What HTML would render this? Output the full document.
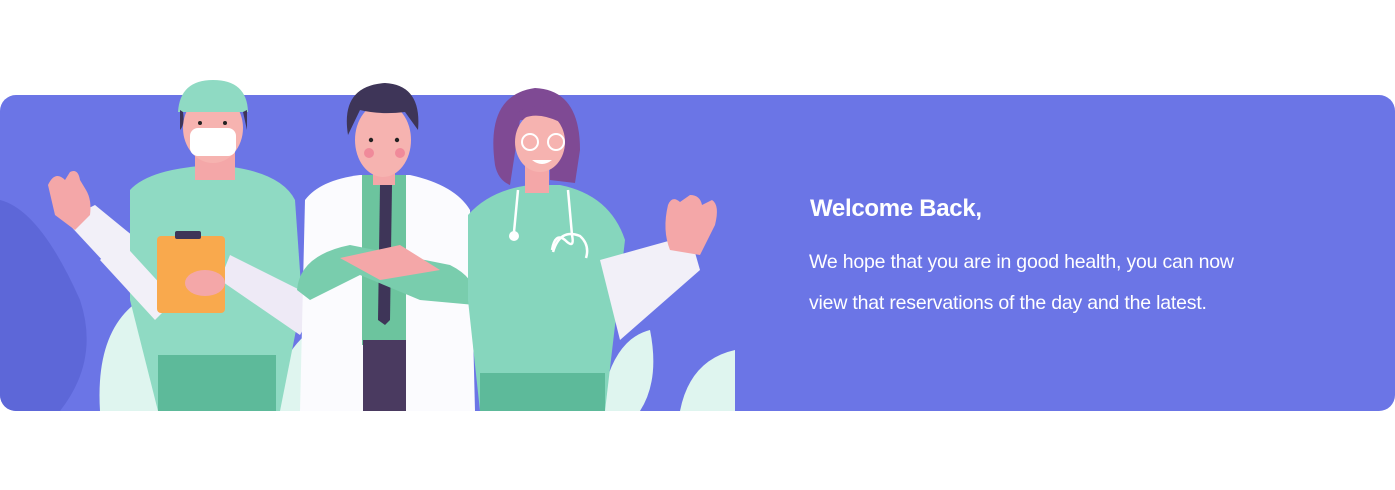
<!DOCTYPE html>
<html><head><meta charset="utf-8"><style>
html,body{margin:0;padding:0;background:#fff;width:1395px;height:490px;overflow:hidden;font-family:"Liberation Sans",sans-serif}
.card{position:absolute;left:0;top:95px;width:1395px;height:316px;background:#6b75e6;border-radius:16px;overflow:hidden}
svg{position:absolute;left:0;top:0}
h1{position:absolute;left:810px;top:195px;margin:0;color:#fff;font-size:24px;font-weight:bold;letter-spacing:-0.3px}
p{position:absolute;left:809px;top:242px;margin:0;color:#fff;font-size:19.5px;line-height:41px;width:560px;letter-spacing:-0.2px}
</style></head><body>
<div class="card"></div>
<svg width="1395" height="490" viewBox="0 0 1395 490">
<defs><clipPath id="c"><path d="M0 60H735V411H16A16 16 0 0 1 0 395Z"/></clipPath>
<clipPath id="c2"><path d="M16 95H735V411H16A16 16 0 0 1 0 395V111A16 16 0 0 1 16 95Z"/></clipPath></defs>
<g clip-path="url(#c2)">
<path d="M100 411 Q95 330 140 300 Q150 360 160 411Z" fill="#dff5ef"/>
<path d="M270 411 Q280 340 330 320 Q330 380 300 411Z" fill="#dff5ef"/>
<path d="M600 411 Q610 340 650 330 Q660 380 640 411Z" fill="#dff5ef"/>
<path d="M680 411 Q690 360 735 350 V411Z" fill="#dff5ef"/>
<path d="M0 200 Q40 210 80 300 Q100 360 60 411H0Z" fill="#5d67d8"/>
</g>
<g clip-path="url(#c)">
<path d="M65 220 L130 290 L150 250 L95 205Z" fill="#f2f0f8"/>
<path d="M48 185 Q55 170 65 180 L70 172 Q78 168 80 180 L86 190 Q92 200 90 215 L75 230 L55 215Z" fill="#f4a7a8"/>
<path d="M130 190 Q150 168 215 165 Q280 170 295 200 L302 300 L280 411 H158 L130 300Z" fill="#8fdac3"/>
<rect x="158" y="355" width="118" height="56" fill="#5dba9a"/>
<path d="M100 260 L155 320 L175 300 L120 240Z" fill="#f2f0f8"/>
<path d="M220 280 L300 335 L320 300 L230 255Z" fill="#eeeaf6"/>
<rect x="195" y="145" width="40" height="35" fill="#f4a7a8"/>
<ellipse cx="213" cy="128" rx="30" ry="35" fill="#f6b3b0"/>
<path d="M178 112 Q180 80 213 80 Q247 80 248 112Z" fill="#8fdac3"/>
<path d="M183 112 Q185 125 180 130 L180 110Z M243 112 L247 130 L247 110Z" fill="#3e3558"/>
<rect x="190" y="128" width="46" height="28" rx="8" fill="#fff"/>
<circle cx="200" cy="123" r="2" fill="#222"/><circle cx="225" cy="123" r="2" fill="#222"/>
<rect x="157" y="236" width="68" height="77" rx="4" fill="#f9a94d"/>
<rect x="175" y="231" width="26" height="8" rx="2" fill="#3e3558"/>
<ellipse cx="205" cy="283" rx="20" ry="13" fill="#f4a7a8"/>
<path d="M305 200 Q320 180 360 175 H410 Q455 185 470 210 L475 411 H300Z" fill="#fbfbfe"/>
<rect x="362" y="175" width="44" height="170" fill="#6cc49e"/>
<path d="M380 185 H392 L390 320 L385 325 L378 320Z" fill="#3e3558"/>
<rect x="363" y="340" width="43" height="71" fill="#4a3a60"/>
<rect x="373" y="160" width="22" height="25" fill="#f4a7a8"/>
<ellipse cx="383" cy="140" rx="28" ry="37" fill="#f6b3b0"/>
<path d="M348 135 Q340 86 385 83 Q422 85 418 130 L405 112 Q380 115 360 110Z" fill="#3e3558"/>
<circle cx="371" cy="140" r="2.2" fill="#222"/><circle cx="397" cy="140" r="2.2" fill="#222"/>
<circle cx="369" cy="153" r="5" fill="#f08a9a"/><circle cx="400" cy="153" r="5" fill="#f08a9a"/>
<path d="M297 290 Q300 255 350 245 L450 265 Q480 280 475 305 L420 300 L360 275 L310 300Z" fill="#79cdad"/>
<path d="M340 258 L400 245 L440 270 L380 280Z" fill="#f4a7a8"/>
<path d="M468 215 Q490 190 530 185 H560 Q610 195 625 240 L605 411 H480 L468 300Z" fill="#86d6bd"/>
<rect x="480" y="373" width="125" height="38" fill="#5dba9a"/>
<path d="M600 260 L690 235 L700 270 L620 340Z" fill="#f2f0f8"/>
<path d="M670 250 Q662 230 668 205 Q672 195 680 202 L690 195 Q700 195 702 205 L712 200 Q720 205 715 225 L700 255Z" fill="#f4a7a8"/>
<path d="M495 165 Q485 95 535 88 Q580 90 580 150 L575 183 L550 180 L550 120 L520 120 L510 185 Q498 180 495 165Z" fill="#7f4a94"/>
<rect x="525" y="165" width="24" height="28" fill="#f4a7a8"/>
<ellipse cx="540" cy="142" rx="25" ry="30" fill="#f6b3b0"/>
<path d="M515 125 Q530 108 560 122 L555 110 Q530 100 515 115Z" fill="#7f4a94"/>
<circle cx="530" cy="142" r="8" fill="none" stroke="#fff" stroke-width="2"/><circle cx="556" cy="142" r="8" fill="none" stroke="#fff" stroke-width="2"/>
<path d="M532 160 Q542 168 552 160Z" fill="#fff"/>
<path d="M518 190 L514 232 M568 190 L572 235 Q575 250 565 240 Q555 232 552 250" fill="none" stroke="#fff" stroke-width="2.5"/>
<path d="M553 252 Q560 228 580 236 Q590 245 586 258" fill="none" stroke="#fff" stroke-width="2.5"/>
<circle cx="514" cy="236" r="5" fill="#fff"/>
</g>
</svg>
<h1>Welcome Back,</h1>
<p>We hope that you are in good health, you can now<br>view that reservations of the day and the latest.</p>
</body></html>
